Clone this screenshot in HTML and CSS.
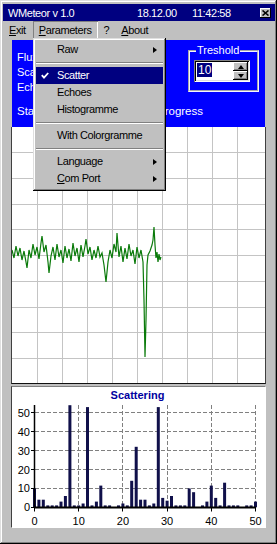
FILE: index.html
```html
<!DOCTYPE html>
<html>
<head>
<meta charset="utf-8">
<link rel="stylesheet" href="styles.css">
</head>
<body>
<div class="window">
  <div class="titlebar">
    <span class="title">WMeteor v 1.0</span>
    <span class="date">18.12.00</span>
    <span class="time">11:42:58</span>
    <span class="close"><svg width="7" height="6" viewBox="0 0 7 6"><path d="M0.5 0.5 L6.5 5.5 M6.5 0.5 L0.5 5.5" stroke="#000" stroke-width="1.6"/></svg></span>
  </div>
  <div class="menubar">
    <span class="mi mi-first"><u>E</u>xit</span>
    <span class="mi pressed"><u>P</u>arameters</span>
    <span class="mi">?</span>
    <span class="mi"><u>A</u>bout</span>
  </div>
  <div class="client">
    <div class="info">
      <div class="labels">
        <div>Flux :</div>
        <div>Scatter :</div>
        <div>Echoes :</div>
      </div>
      <fieldset class="group">
        <legend>Treshold</legend>
        <div class="spin">
          <span class="spin-val">10</span>
          <span class="spin-btns">
            <span class="spin-btn"><span class="tri-up"></span></span>
            <span class="spin-btn"><span class="tri-down"></span></span>
          </span>
        </div>
      </fieldset>
      <div class="status"><span>Status :</span><span>Measure in progress</span></div>
    </div>
    <div class="linechart">
      <svg width="253" height="256" viewBox="0 0 253 256">
        <g stroke="#c4c4c4" stroke-width="1">
          <path d="M25.5 0V256M50.5 0V256M75.5 0V256M100.5 0V256M125.5 0V256M150.5 0V256M175.5 0V256M200.5 0V256M225.5 0V256"/>
          <path d="M0 25.5H253M0 51.5H253M0 77.5H253M0 102.5H253M0 128.5H253M0 154.5H253M0 180.5H253M0 205.5H253M0 231.5H253"/>
        </g>
        <polyline fill="none" stroke="#0a7a0a" stroke-width="1.2" points="0,123 2,131 4,119 6,129 8,121 10,133 12,124 14,135 15,141 17,123 19,131 21,117 23,128 25,120 27,132 29,116 30,109 32,125 34,118 36,135 37,146 39,129 41,120 43,133 45,117 47,130 49,123 51,136 53,119 55,131 57,122 59,134 61,116 63,129 65,121 67,135 69,118 71,130 73,119 74,112 76,127 78,120 80,133 82,123 84,131 86,119 88,130 90,126 92,138 94,155 96,135 98,123 100,131 102,117 104,125 105,106 107,130 109,119 111,135 113,121 115,132 117,117 119,129 121,123 123,137 125,120 127,131 129,123 131,135 132,173 133,230 134,193 135,138 136,128 138,124 140,118 141,113 142,100 143,118 144,131 145,125 146,135 147,127 148,133 149,130"/>
      </svg>
    </div>
    <div class="scatter">
      <svg width="253" height="140" viewBox="0 0 253 140" class="scsvg">
        <text x="125.5" y="12" text-anchor="middle" class="sc-title">Scattering</text>
        <g stroke="#808080" stroke-width="1" stroke-dasharray="4 2" fill="none">
          <path d="M23 101.5H243.5M23 82.5H243.5M23 63.5H243.5M23 44.5H243.5M23 25.5H243.5"/>
          <path d="M66.5 18V120M110.5 18V120M155.5 18V120M199.5 18V120M243.5 18V120"/>
        </g>
        <g fill="#10104a">
          <rect x="21.0" y="101.4" width="3" height="18.9"/>
          <rect x="25.4" y="112.7" width="3" height="7.6"/>
          <rect x="29.8" y="112.7" width="3" height="7.6"/>
          <rect x="34.3" y="118.4" width="3" height="1.9"/>
          <rect x="38.7" y="118.4" width="3" height="1.9"/>
          <rect x="43.1" y="118.4" width="3" height="1.9"/>
          <rect x="47.5" y="114.6" width="3" height="5.7"/>
          <rect x="51.9" y="109.0" width="3" height="11.3"/>
          <rect x="56.4" y="18.2" width="3" height="102.1"/>
          <rect x="60.8" y="118.4" width="3" height="1.9"/>
          <rect x="65.2" y="118.4" width="3" height="1.9"/>
          <rect x="69.6" y="116.5" width="3" height="3.8"/>
          <rect x="74.0" y="20.1" width="3" height="100.2"/>
          <rect x="78.5" y="118.4" width="3" height="1.9"/>
          <rect x="82.9" y="114.6" width="3" height="5.7"/>
          <rect x="87.3" y="98.6" width="3" height="21.7"/>
          <rect x="91.7" y="118.4" width="3" height="1.9"/>
          <rect x="96.1" y="118.4" width="3" height="1.9"/>
          <rect x="105.0" y="118.4" width="3" height="1.9"/>
          <rect x="109.4" y="116.5" width="3" height="3.8"/>
          <rect x="113.8" y="118.4" width="3" height="1.9"/>
          <rect x="118.2" y="93.8" width="3" height="26.5"/>
          <rect x="122.7" y="59.8" width="3" height="60.5"/>
          <rect x="127.1" y="112.7" width="3" height="7.6"/>
          <rect x="131.5" y="112.7" width="3" height="7.6"/>
          <rect x="135.9" y="118.4" width="3" height="1.9"/>
          <rect x="140.3" y="116.5" width="3" height="3.8"/>
          <rect x="144.8" y="20.1" width="3" height="100.2"/>
          <rect x="149.2" y="110.9" width="3" height="9.4"/>
          <rect x="153.6" y="113.7" width="3" height="6.6"/>
          <rect x="158.0" y="109.0" width="3" height="11.3"/>
          <rect x="162.4" y="118.4" width="3" height="1.9"/>
          <rect x="166.9" y="118.4" width="3" height="1.9"/>
          <rect x="171.3" y="118.4" width="3" height="1.9"/>
          <rect x="175.7" y="101.4" width="3" height="18.9"/>
          <rect x="180.1" y="105.2" width="3" height="15.1"/>
          <rect x="189.0" y="118.4" width="3" height="1.9"/>
          <rect x="193.4" y="114.6" width="3" height="5.7"/>
          <rect x="197.8" y="98.6" width="3" height="21.7"/>
          <rect x="202.2" y="110.9" width="3" height="9.4"/>
          <rect x="206.6" y="118.4" width="3" height="1.9"/>
          <rect x="211.1" y="95.7" width="3" height="24.6"/>
          <rect x="215.5" y="118.4" width="3" height="1.9"/>
          <rect x="219.9" y="118.4" width="3" height="1.9"/>
          <rect x="224.3" y="118.4" width="3" height="1.9"/>
          <rect x="233.2" y="118.4" width="3" height="1.9"/>
          <rect x="237.6" y="118.4" width="3" height="1.9"/>
          <rect x="242.0" y="114.6" width="3" height="5.7"/>
        </g>
        <g stroke="#000" fill="none">
          <path d="M22.5 18V121" stroke-width="1.5"/>
          <path d="M22 120.5H244" stroke-width="2"/>
          <path d="M19 25.5H22M19 44.5H22M19 63.5H22M19 82.5H22M19 101.5H22M19 120.5H22" stroke-width="1"/>
          <path d="M22.5 121V124.5M66.5 121V124.5M110.5 121V124.5M155.5 121V124.5M199.5 121V124.5M243.5 121V124.5" stroke-width="1"/>
        </g>
        <g class="ax" text-anchor="end">
          <text x="18" y="29.8">50</text>
          <text x="18" y="48.7">40</text>
          <text x="18" y="67.6">30</text>
          <text x="18" y="86.5">20</text>
          <text x="18" y="105.4">10</text>
          <text x="18" y="124.3">0</text>
        </g>
        <g class="ax" text-anchor="middle">
          <text x="22.5" y="138">0</text>
          <text x="66.7" y="138">10</text>
          <text x="110.9" y="138">20</text>
          <text x="155.1" y="138">30</text>
          <text x="199.3" y="138">40</text>
          <text x="243.5" y="138">50</text>
        </g>
      </svg>
    </div>
  </div>

  <div class="dropdown">
    <div class="item"><span class="ic"></span><span>Raw</span><span class="arrow"></span></div>
    <div class="sep"><div class="sep-line"></div></div>
    <div class="item sel"><span class="ic"><svg width="8" height="7" viewBox="0 0 8 7"><path d="M0.8 3.2 L3 5.6 L7.2 1" fill="none" stroke="#fff" stroke-width="1.8"/></svg></span><span>Scatter</span></div>
    <div class="item"><span class="ic"></span><span>Echoes</span></div>
    <div class="item"><span class="ic"></span><span>Histogramme</span></div>
    <div class="sep"><div class="sep-line"></div></div>
    <div class="item"><span class="ic"></span><span>With Colorgramme</span></div>
    <div class="sep"><div class="sep-line"></div></div>
    <div class="item"><span class="ic"></span><span>Language</span><span class="arrow"></span></div>
    <div class="item"><span class="ic"></span><span><u>C</u>om Port</span><span class="arrow"></span></div>
  </div>
</div>
</body>
</html>
```

FILE: styles.css
```css
* {
  box-sizing: border-box;
}

body {
  margin: 0;
  font-family: "Liberation Sans", Arial, sans-serif;
  font-size: 11px;
  color: #000;
}

.window {
  position: relative;
  width: 277px;
  height: 544px;
  background: #c0c0c0;
  padding: 4px 2px 0 3px;
  box-shadow: inset -1px -1px #000, inset 1px 1px #dfdfdf, inset -2px -2px #808080, inset 2px 2px #fff;
  overflow: hidden;
}

/* title bar */
.titlebar {
  height: 17px;
  background: #000080;
  color: #fff;
  display: flex;
  align-items: center;
  padding-left: 5px;
  letter-spacing: -0.4px;
  white-space: nowrap;
}

.title {
  width: 129px;
}

.date {
  width: 55px;
}

.close {
  margin-left: auto;
  margin-right: 4px;
  width: 11px;
  height: 10px;
  background: #c0c0c0;
  box-shadow: inset -1px -1px #000, inset 1px 1px #fff;
  display: flex;
  align-items: center;
  justify-content: center;
}

.close svg {
  display: block;
}

/* menu bar */
.menubar {
  height: 19px;
  display: flex;
  align-items: flex-start;
  letter-spacing: -0.4px;
  white-space: nowrap;
}

.mi {
  height: 18px;
  line-height: 18px;
  padding: 0 6px;
}

.mi-first {
  padding-right: 7px;
}

.pressed {
  box-shadow: inset 1px 1px #808080, inset -1px -1px #fff;
}

/* client */
.client {
  margin-left: 8px;
  width: 255px;
}

.info {
  margin: 0 1px;
  height: 87px;
  background: #0000ff;
  color: #fff;
  display: grid;
  grid-template-columns: 1fr 71px;
  grid-template-rows: 51px auto;
  padding: 4px 6px 0 5px;
  white-space: nowrap;
}

.labels {
  margin-top: 6px;
  line-height: 15px;
}

.group {
  margin: 0;
  padding: 0 5px 8px;
  border: 2px groove #f4f4ff;
  min-width: 0;
  align-self: start;
}

.group legend {
  padding: 0 1px;
  margin-left: 1px;
  line-height: 13px;
  color: #fff;
}

.spin {
  margin-top: 3px;
  width: 56px;
  height: 22px;
  margin-left: -1px;
  background: #fff;
  box-shadow: inset 1px 1px #808080, inset -1px -1px #fff, inset 2px 2px #000, inset -2px -2px #dfdfdf;
  display: flex;
  padding: 2px;
  color: #000;
}

.spin-val {
  margin: 1px 0 0 1px;
  height: 14px;
  line-height: 14px;
  padding: 0 1px;
  background: #000080;
  color: #fff;
  align-self: flex-start;
  font-size: 12px;
}

.spin-btns {
  margin-left: auto;
  width: 15px;
  display: flex;
  flex-direction: column;
}

.spin-btn {
  flex: 1;
  background: #c0c0c0;
  box-shadow: inset -1px -1px #000, inset 1px 1px #fff, inset -2px -2px #808080;
  display: flex;
  align-items: center;
  justify-content: center;
}

.tri-up {
  width: 0;
  height: 0;
  border-left: 3.5px solid transparent;
  border-right: 3.5px solid transparent;
  border-bottom: 4px solid #000;
}

.tri-down {
  width: 0;
  height: 0;
  border-left: 3.5px solid transparent;
  border-right: 3.5px solid transparent;
  border-top: 4px solid #000;
}

.status {
  grid-column: 1 / -1;
  display: flex;
  justify-content: space-between;
  width: 186px;
  margin-top: 8px;
  line-height: 16px;
  font-size: 11.5px;
}

.linechart {
  height: 257px;
  background: #fff;
  border-left: 1px solid #404040;
  border-right: 1px solid #404040;
  border-bottom: 1px solid #101010;
}

.linechart svg {
  display: block;
}

.scatter {
  margin-top: 2px;
  height: 142px;
  background: #fff;
  border: 1px solid;
  border-color: #808080 #ffffff #ffffff #404040;
}

.scsvg {
  display: block;
}

.sc-title {
  font-family: "Liberation Sans", Arial, sans-serif;
  font-weight: bold;
  font-size: 11px;
  fill: #0000a0;
}

.ax text {
  font-family: "Liberation Sans", Arial, sans-serif;
  font-size: 11px;
  fill: #000;
}

/* dropdown menu */
.dropdown {
  position: absolute;
  left: 33px;
  top: 38px;
  width: 133px;
  height: 153px;
  background: #c0c0c0;
  padding: 3px;
  box-shadow: inset -1px -1px #000, inset 1px 1px #dfdfdf, inset -2px -2px #808080, inset 2px 2px #fff;
  letter-spacing: -0.4px;
  white-space: nowrap;
}

.item {
  height: 17px;
  line-height: 17px;
  display: flex;
  align-items: center;
  padding-left: 5px;
}

.item.sel {
  background: #000080;
  color: #fff;
}

.ic {
  width: 16px;
  display: flex;
  align-items: center;
}

.ic svg {
  display: block;
}

.arrow {
  margin-left: auto;
  margin-right: 6px;
  width: 0;
  height: 0;
  border-top: 3.5px solid transparent;
  border-bottom: 3.5px solid transparent;
  border-left: 4px solid #000;
}

.sep {
  height: 9px;
  padding-top: 4px;
}

.sep-line {
  border-top: 1px solid #808080;
  border-bottom: 1px solid #fff;
}
```
